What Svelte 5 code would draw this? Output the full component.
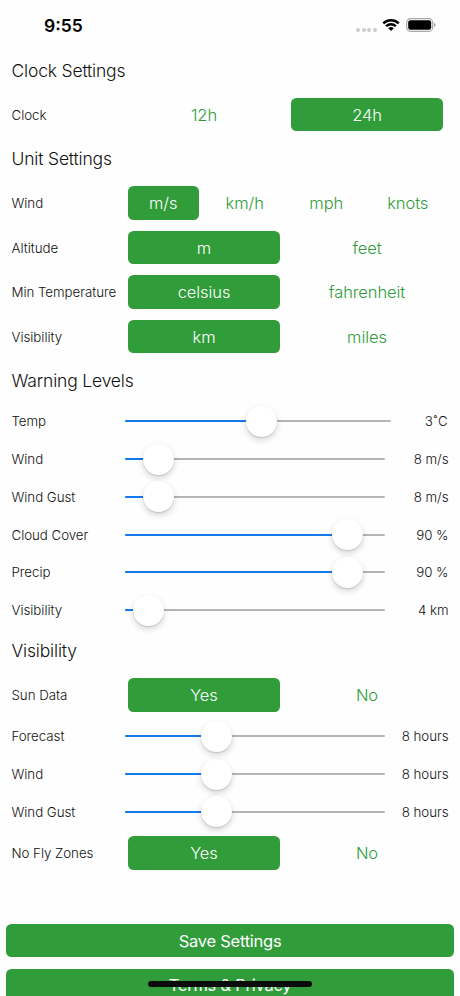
<script>
  const sections = [
    {
      title: 'Clock Settings',
      rows: [{ label: 'Clock', options: ['12h', '24h'], selected: '24h' }]
    },
    {
      title: 'Unit Settings',
      rows: [
        { label: 'Wind', options: ['m/s', 'km/h', 'mph', 'knots'], selected: 'm/s' },
        { label: 'Altitude', options: ['m', 'feet'], selected: 'm' },
        { label: 'Min Temperature', options: ['celsius', 'fahrenheit'], selected: 'celsius' },
        { label: 'Visibility', options: ['km', 'miles'], selected: 'km' }
      ]
    },
    {
      title: 'Warning Levels',
      rows: [
        { label: 'Temp', percent: 51.7, value: '3˚C', narrow: true },
        { label: 'Wind', percent: 8, value: '8 m/s' },
        { label: 'Wind Gust', percent: 8, value: '8 m/s' },
        { label: 'Cloud Cover', percent: 90.2, value: '90 %' },
        { label: 'Precip', percent: 90.2, value: '90 %' },
        { label: 'Visibility', percent: 3.7, value: '4 km' }
      ]
    },
    {
      title: 'Visibility',
      rows: [
        { label: 'Sun Data', options: ['Yes', 'No'], selected: 'Yes' },
        { label: 'Forecast', percent: 33.1, value: '8 hours' },
        { label: 'Wind', percent: 33.1, value: '8 hours' },
        { label: 'Wind Gust', percent: 33.1, value: '8 hours' },
        { label: 'No Fly Zones', options: ['Yes', 'No'], selected: 'Yes' }
      ]
    }
  ];

  let settings = $state(sections);
</script>

<div class="screen">
  <header class="status-bar">
    <span class="time">9:55</span>
    <div class="status-icons">
      <span class="dots"><i></i><i></i><i></i><i></i></span>
      <svg class="wifi" width="18" height="14" viewBox="0 0 18 14">
        <path d="M0.4 4.5 A12.4 12.4 0 0 1 17.6 4.5 L15.9 6.2 A9.9 9.9 0 0 0 2.1 6.2 Z" />
        <path d="M3.3 7.4 A8.2 8.2 0 0 1 14.7 7.4 L13 9.1 A5.8 5.8 0 0 0 5 9.1 Z" />
        <path d="M6.2 10.3 A4.1 4.1 0 0 1 11.8 10.3 L9 13.1 Z" />
      </svg>
      <svg class="battery" width="30" height="14" viewBox="0 0 30 14">
        <rect x="0.7" y="0.7" width="26" height="12.6" rx="3.8" fill="none" stroke="#a8a8a8" stroke-width="1.2" />
        <rect x="2.2" y="2.2" width="23" height="9.6" rx="2.3" />
        <path d="M28 4.8 Q29.6 5.6 29.6 7 Q29.6 8.4 28 9.2 Z" fill="#a8a8a8" />
      </svg>
    </div>
  </header>

  <main>
    {#each settings as section}
      <h2>{section.title}</h2>
      {#each section.rows as row}
        {#if row.options}
          <div class="row">
            <span class="label">{row.label}</span>
            <div class="options">
              {#each row.options as option}
                <button class:selected={row.selected === option} onclick={() => (row.selected = option)}>
                  {option}
                </button>
              {/each}
            </div>
          </div>
        {:else}
          <div class="row slider-row">
            <span class="label">{row.label}</span>
            <div class="slider">
              <div class="fill" style="width: {row.percent}%"></div>
              <div class="knob-range">
                <div class="knob" style="left: {row.percent}%"></div>
              </div>
            </div>
            <span class="value" class:narrow={row.narrow}>{row.value}</span>
          </div>
        {/if}
      {/each}
    {/each}
  </main>

  <footer>
    <button class="selected">Save Settings</button>
    <button class="selected">Terms &amp; Privacy</button>
  </footer>

  <div class="home-indicator"></div>
</div>

<style>
  :global(body) {
    background: #fff;
  }

  .screen {
    position: relative;
    box-sizing: border-box;
    width: 460px;
    height: 996px;
    overflow: hidden;
    background: #fefefe;
    color: #111;
    font-family: Inter, 'Liberation Sans', sans-serif;
    font-weight: 300;
  }

  .status-bar {
    display: flex;
    align-items: center;
    justify-content: space-between;
    box-sizing: border-box;
    height: 48.7px;
    padding: 2px 24px 0 44px;
  }

  .time {
    font-size: 17.5px;
    font-weight: 600;
    color: #000;
  }

  .status-icons {
    display: flex;
    align-items: center;
  }

  .dots {
    display: flex;
    gap: 1.6px;
    margin: 9px 5px 0 0;
  }

  .dots i {
    width: 4px;
    height: 4px;
    border-radius: 50%;
    background: #ccc;
  }

  .wifi {
    margin-right: 6px;
  }

  h2 {
    display: flex;
    align-items: center;
    height: 43.8px;
    margin: 0;
    padding-left: 11.5px;
    font-size: 17.5px;
    font-weight: 300;
    letter-spacing: -0.18px;
  }

  .row {
    display: flex;
    align-items: center;
    height: 44.5px;
    padding: 0 11.5px;
  }

  .slider-row {
    height: 37.75px;
  }

  .label {
    flex: none;
    width: 113px;
    font-size: 13.3px;
    letter-spacing: -0.04px;
    white-space: nowrap;
  }

  .options {
    display: flex;
    flex: 1;
    gap: 11px;
    padding: 0 5.5px 0 3.5px;
  }

  button {
    height: 33.3px;
    padding: 0;
    border: 0;
    border-radius: 5.5px;
    background: none;
    color: #309c3a;
    font: inherit;
    font-size: 16.5px;
    letter-spacing: -0.08px;
  }

  .options button {
    flex: 1 1 0;
    min-width: 0;
  }

  button.selected {
    background: #309c3a;
    color: #fff;
  }

  .slider {
    position: relative;
    flex: 1;
    height: 2px;
    border-radius: 1px;
    background: #b4b4b4;
  }

  .fill {
    height: 100%;
    border-radius: 1px;
    background: #137aeb;
  }

  .knob-range {
    position: absolute;
    inset: 0 15.5px;
  }

  .knob {
    position: absolute;
    top: -14.5px;
    width: 31px;
    height: 31px;
    margin-left: -15.5px;
    border-radius: 50%;
    background: #fff;
    box-shadow: 0 3px 6px rgba(0, 0, 0, 0.17), 0 1px 1px rgba(0, 0, 0, 0.12);
  }

  .value {
    width: 63.3px;
    font-size: 13.3px;
    letter-spacing: -0.04px;
    text-align: right;
    white-space: nowrap;
  }

  .value.narrow {
    width: 57.5px;
    letter-spacing: 0.8px;
  }

  footer {
    display: flex;
    flex-direction: column;
    gap: 11.2px;
    padding: 49px 6px 0;
  }

  footer button {
    font-weight: 400;
    letter-spacing: -0.25px;
  }

  .home-indicator {
    position: absolute;
    left: 148px;
    bottom: 9px;
    width: 164px;
    height: 6px;
    border-radius: 3px;
    background: #0a0a0a;
  }
</style>
